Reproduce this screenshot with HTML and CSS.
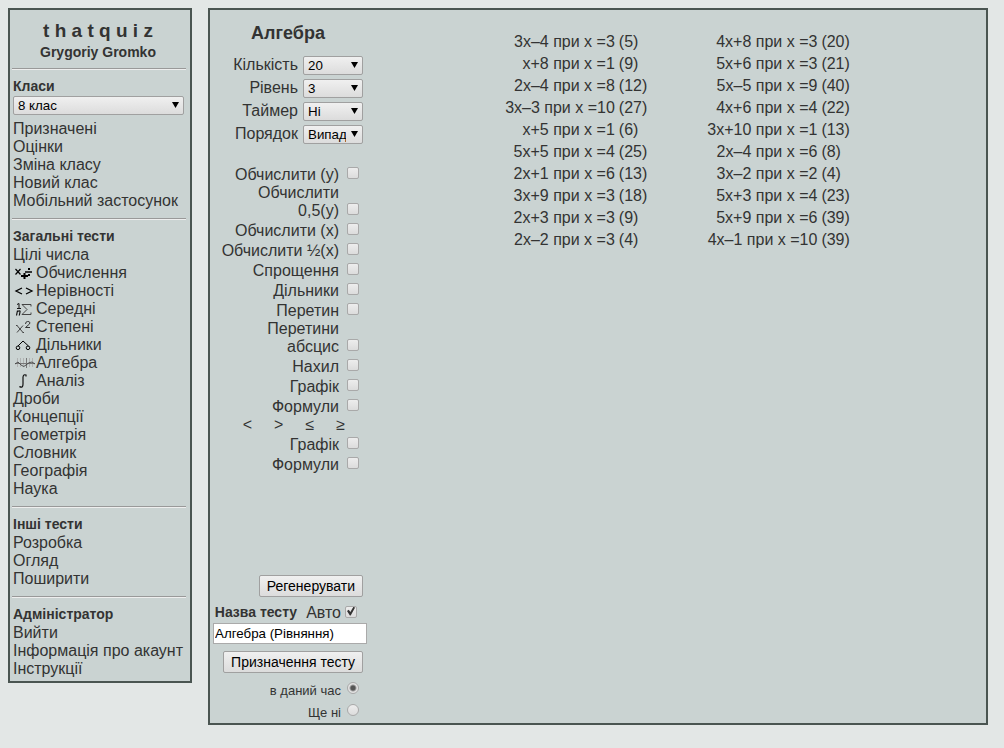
FILE: index.html
```html
<!DOCTYPE html>
<html lang="uk">
<head>
<meta charset="utf-8">
<title>Алгебра</title>
<link rel="stylesheet" href="styles.css">
</head>
<body>
<div class="page">
  <nav class="panel sidebar">
    <div class="brand">t h a t q u i z</div>
    <div class="user">Grygoriy Gromko</div>
    <hr>
    <label class="group" for="class">Класи</label>
    <span class="select class-select"><select id="class"><option>8 клас</option></select></span>
    <a href="#">Призначені</a>
    <a href="#">Оцінки</a>
    <a href="#">Зміна класу</a>
    <a href="#">Новий клас</a>
    <a href="#">Мобільний застосунок</a>
    <hr>
    <h2 class="group">Загальні тести</h2>
    <a href="#">Цілі числа</a>
    <a href="#"><svg class="icon" viewBox="0 0 23 18"><path d="M2.500 5l5 5.500M7.500 5l-5 5.500" stroke="#000" stroke-width="1.200"/><path d="M8 12h7M11.500 9v6" stroke="#000" stroke-width="2"/><path d="M12 8h7" stroke="#000" stroke-width="1.500"/><path d="M15 4h2v2h-2zM15 10h2v2h-2z" fill="#000"/></svg>Обчислення</a>
    <a href="#"><svg class="icon" viewBox="0 0 23 18"><path d="M9 6L3 9l6 3M13 6l6 3l-6 3" stroke="#000" stroke-width="1.300"/></svg>Нерівності</a>
    <a href="#"><svg class="icon" viewBox="0 0 23 18"><path d="M4 4.500l2-1v5M4 8.500h4" stroke="#111"/><path d="M4.500 10.500l-1 5M4 12q3.500-2.500 3 0l-.7 3.500" stroke="#111" stroke-width="1.200"/><path d="M18 6.500V4.500H9l5 5L9 14.500h9v-2" stroke="#444"/></svg>Середні</a>
    <a href="#"><svg class="icon" viewBox="0 0 23 18"><path d="M4 7.500l6 7M10 7.500l-6 7M3 7.500h1.500M9.500 14.500H11" stroke="#444"/><path d="M12.500 6q0-2.500 2.200-2.500q3 0 1.800 2.500L12.500 9.500h4.500" stroke="#333"/></svg>Степені</a>
    <a href="#"><svg class="icon" viewBox="0 0 23 18"><path d="M5 10l5-5l5.500 5" stroke="#000"/><circle cx="5" cy="11.800" r="1.800" stroke="#000"/><circle cx="15" cy="11.800" r="1.800" stroke="#000"/></svg>Дільники</a>
    <a href="#"><svg class="icon" viewBox="0 0 23 18"><path d="M4.500 4v9M7.500 4v9M10.500 4v9M16.500 4v9M19.500 4v9" stroke="#aaa" stroke-width=".8"/><path d="M2 9.500h20M13.500 4v10" stroke="#777"/><path d="M2 10l3-2l3 3q3 3 5 0q3-3 6-3l3 2" stroke="#444" stroke-width=".9"/></svg>Алгебра</a>
    <a href="#"><svg class="icon" viewBox="0 0 23 18"><path d="M13 4.500V3q-2.500-1-3 2v7q0 4-3 3v-1" stroke="#111" stroke-width="1.200"/></svg>Аналіз</a>
    <a href="#">Дроби</a>
    <a href="#">Концепції</a>
    <a href="#">Геометрія</a>
    <a href="#">Словник</a>
    <a href="#">Географія</a>
    <a href="#">Наука</a>
    <hr>
    <h2 class="group">Інші тести</h2>
    <a href="#">Розробка</a>
    <a href="#">Огляд</a>
    <a href="#">Поширити</a>
    <hr>
    <h2 class="group">Адміністратор</h2>
    <a href="#">Вийти</a>
    <a href="#">Інформація про акаунт</a>
    <a href="#">Інструкції</a>
  </nav>

  <main class="panel main">
    <form class="options">
      <h1>Алгебра</h1>
      <div class="settings">
        <label for="count">Кількість</label>
        <span class="select"><select id="count"><option>20</option></select></span>
        <label for="level">Рівень</label>
        <span class="select"><select id="level"><option>3</option></select></span>
        <label for="timer">Таймер</label>
        <span class="select"><select id="timer"><option>Ні</option></select></span>
        <label for="order">Порядок</label>
        <span class="select"><select id="order"><option>Випадковий</option></select></span>
      </div>

      <div class="checks">
        <label class="check"><span>Обчислити (y)</span><input type="checkbox"></label>
        <label class="check tight"><span>Обчислити 0,5(y)</span><input type="checkbox"></label>
        <label class="check"><span>Обчислити (x)</span><input type="checkbox"></label>
        <label class="check"><span>Обчислити ½(x)</span><input type="checkbox"></label>
        <label class="check"><span>Спрощення</span><input type="checkbox"></label>
        <label class="check"><span>Дільники</span><input type="checkbox"></label>
        <label class="check"><span>Перетин</span><input type="checkbox"></label>
        <label class="check tight"><span>Перетини абсцис</span><input type="checkbox"></label>
        <label class="check"><span>Нахил</span><input type="checkbox"></label>
        <label class="check"><span>Графік</span><input type="checkbox"></label>
        <label class="check"><span>Формули</span><input type="checkbox"></label>
        <div class="signs"><span>&lt;</span><span>&gt;</span><span>≤</span><span>≥</span></div>
        <label class="check"><span>Графік</span><input type="checkbox"></label>
        <label class="check"><span>Формули</span><input type="checkbox"></label>
      </div>

      <button type="button" class="regenerate">Регенерувати</button>
      <div class="name-row">
        <label class="name-label" for="name">Назва тесту</label>
        <label class="auto">Авто<input type="checkbox" checked></label>
      </div>
      <input class="name" id="name" type="text" value="Алгебра (Рівняння)">
      <button type="button" class="assign">Призначення тесту</button>
      <label class="when">в даний час<input type="radio" name="when" checked></label>
      <label class="when">Ще ні<input type="radio" name="when"></label>
    </form>

    <div class="preview">
      <table>
        <tr><td>3x–4 при x =3</td><td>(5)</td><td>4x+8 при x =3</td><td>(20)</td></tr>
        <tr><td>x+8 при x =1</td><td>(9)</td><td>5x+6 при x =3</td><td>(21)</td></tr>
        <tr><td>2x–4 при x =8</td><td>(12)</td><td>5x–5 при x =9</td><td>(40)</td></tr>
        <tr><td>3x–3 при x =10</td><td>(27)</td><td>4x+6 при x =4</td><td>(22)</td></tr>
        <tr><td>x+5 при x =1</td><td>(6)</td><td>3x+10 при x =1</td><td>(13)</td></tr>
        <tr><td>5x+5 при x =4</td><td>(25)</td><td>2x–4 при x =6</td><td>(8)</td></tr>
        <tr><td>2x+1 при x =6</td><td>(13)</td><td>3x–2 при x =2</td><td>(4)</td></tr>
        <tr><td>3x+9 при x =3</td><td>(18)</td><td>5x+3 при x =4</td><td>(23)</td></tr>
        <tr><td>2x+3 при x =3</td><td>(9)</td><td>5x+9 при x =6</td><td>(39)</td></tr>
        <tr><td>2x–2 при x =3</td><td>(4)</td><td>4x–1 при x =10</td><td>(39)</td></tr>
      </table>
    </div>
  </main>
</div>
</body>
</html>
```
FILE: styles.css
```css
* { box-sizing: border-box; }

body {
  margin: 8px 16px 8px 8px;
  background: #e3e7e6;
  color: #333;
  font: 16px/18px "Liberation Sans", Arial, sans-serif;
}

.page {
  display: flex;
  align-items: flex-start;
  gap: 16px;
}

.panel {
  border: 2px solid #4a5551;
  background: #cad3d2;
}

/* Sidebar */
.sidebar {
  display: flex;
  flex-direction: column;
  flex: 0 0 184px;
  padding: 10px 3px 3px;
}

.brand,
.user {
  padding-right: 4px;
  font-weight: bold;
  text-align: center;
}

.brand {
  font-size: 19px;
  line-height: 22px;
}

.user {
  font-size: 14px;
  line-height: 20px;
  margin-bottom: -2px;
}

hr {
  width: 174px;
  height: 2px;
  margin: 8px 0 8px -1px;
  border: 0;
  border-top: 1px solid #999;
  background: #eee;
}

.group {
  margin: 0 0 2px;
  font-size: 14px;
  line-height: 16px;
  font-weight: bold;
}

.sidebar a {
  display: flex;
  color: inherit;
  text-decoration: none;
  white-space: nowrap;
}

.icon {
  width: 23px;
  height: 18px;
  fill: none;
}

/* Controls */
select,
button,
input {
  font-family: "Liberation Sans", Arial, sans-serif;
}

.select {
  position: relative;
  display: block;
  height: 19px;
}

.select::after {
  content: "";
  position: absolute;
  top: 6px;
  right: 5px;
  width: 7px;
  height: 6px;
  background: #000;
  clip-path: polygon(0 0, 100% 0, 50% 100%);
  pointer-events: none;
}

.class-select { margin: 0 3px 5px 0; }

select {
  appearance: none;
  display: block;
  width: 100%;
  height: 19px;
  padding: 0 16px 0 4px;
  border: 1px solid #a0a0a0;
  border-radius: 2px;
  background: linear-gradient(#f0f0f0, #dcdcdc);
  color: #000;
}

button {
  height: 22px;
  padding: 0 7px;
  border: 1px solid #a0a0a0;
  border-radius: 2px;
  background: linear-gradient(#f0f0f0, #dcdcdc);
  color: #000;
  font-size: 14px;
  line-height: 20px;
}

input[type="checkbox"],
input[type="radio"] {
  appearance: none;
  flex: none;
  width: 12px;
  height: 12px;
  margin: 0;
  border: 1px solid #a9a9a9;
  border-radius: 2px;
  background: linear-gradient(#ededed, #dcdcdc);
}

input[type="radio"] { border-radius: 50%; }

input[type="radio"]:checked {
  background: radial-gradient(circle, #555 0 2px, #e4e4e4 4px);
}

/* Main panel */
.main {
  display: flex;
  flex: 1;
  min-width: 0;
}

.options {
  display: flex;
  flex-direction: column;
  align-items: flex-end;
  flex: 0 0 159px;
  min-width: 0;
  padding: 12px 6px 0 3px;
}

h1 {
  align-self: center;
  margin: 0 0 10px;
  font-size: 18px;
  line-height: 22px;
}

.settings {
  display: grid;
  grid-template-columns: auto 60px;
  grid-auto-rows: 23px;
  column-gap: 5px;
  align-items: center;
  text-align: right;
}

.settings label { padding-bottom: 2px; }

.checks {
  display: flex;
  flex-direction: column;
  align-items: flex-end;
  margin: 18px 4px 101px 0;
}

.check {
  display: flex;
  align-items: flex-end;
  gap: 8px;
  padding-top: 2px;
  text-align: right;
}

.check span { max-width: 120px; }

.check input { margin-bottom: 5px; }

.tight { padding-top: 0; }

.signs {
  display: flex;
  gap: 22px;
  margin-right: 14px;
}

.name-row {
  display: flex;
  align-items: center;
  gap: 9px;
  margin: 7px 6px 1px 0;
}

.name-label {
  padding-bottom: 2px;
  font-size: 14px;
  line-height: 16px;
  font-weight: bold;
}

.auto {
  display: flex;
  align-items: center;
  gap: 4px;
}

.auto input {
  position: relative;
  margin-bottom: 3px;
}

.auto input::after {
  content: "";
  position: absolute;
  inset: 0 1px 1px;
  background: #333;
  clip-path: polygon(0 50%, 22% 35%, 42% 60%, 82% 0, 100% 15%, 46% 100%, 36% 100%);
}

.name {
  align-self: stretch;
  min-width: 0;
  height: 21px;
  margin-right: -4px;
  padding: 0 1px;
  border: 1px solid #aaa;
  background: #fff;
  color: #000;
}

.assign { margin: 7px 0 9px; }

.when {
  display: flex;
  align-items: center;
  gap: 6px;
  margin: 0 4px 4px 0;
  font-size: 13px;
}

.when input { margin-bottom: 6px; }

.when:last-child { margin-bottom: 1px; }

.preview {
  flex: 1;
  padding-top: 21px;
}

table {
  margin: 0 auto;
  border-collapse: collapse;
}

td {
  padding: 0;
  line-height: 22px;
  white-space: nowrap;
}

td:nth-child(odd) {
  padding-right: 4px;
  text-align: right;
}

td:nth-child(3) { padding-left: 60px; }
```
